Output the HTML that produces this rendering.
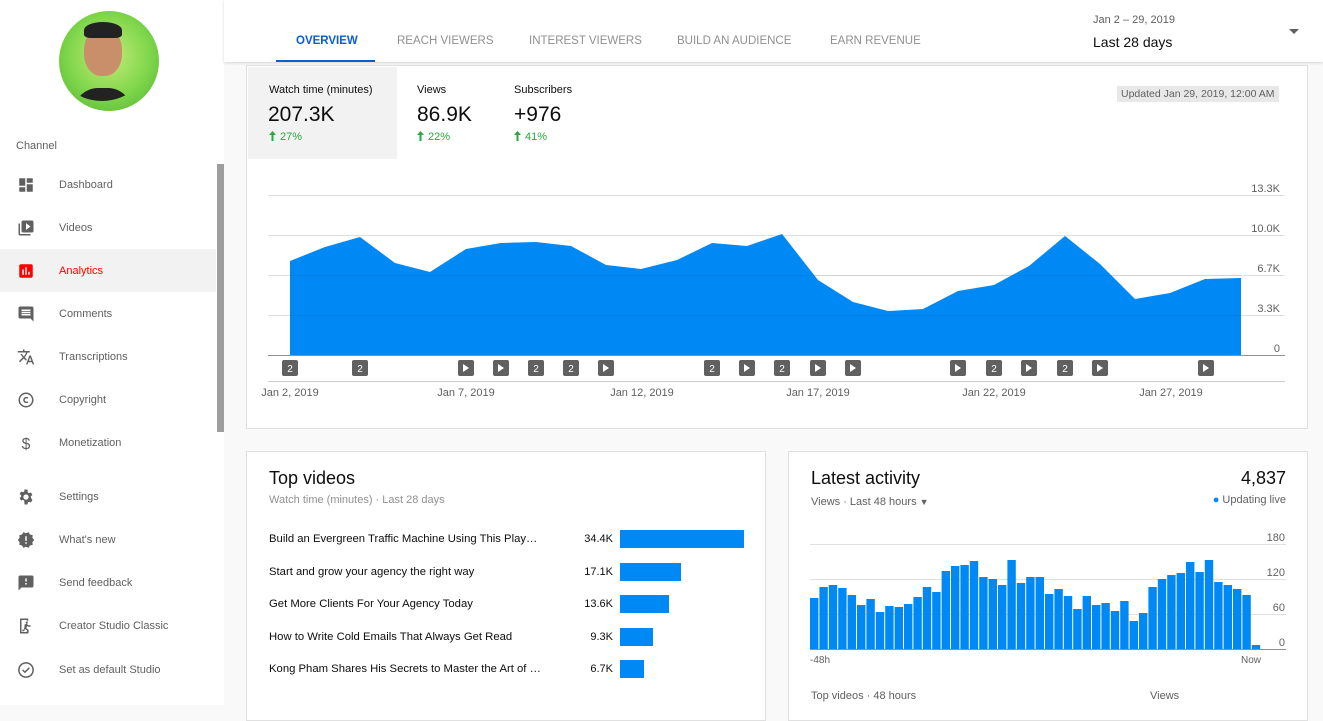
<!DOCTYPE html>
<html><head><meta charset="utf-8"><style>
*{margin:0;padding:0;box-sizing:border-box}
body{width:1323px;height:705px;overflow:hidden;background:#f9f9f9;font-family:"Liberation Sans",sans-serif;position:relative;color:#0d0d0d}
.a{position:absolute;white-space:nowrap}
.side{position:absolute;left:0;top:0;width:224px;height:705px;background:#fff}
.nav{position:absolute;left:0;width:216px;height:43px}
.nav .t{position:absolute;left:59px;top:16px;font-size:11px;color:#606060}
.nav svg{position:absolute;left:17px;top:13px}
.card{position:absolute;background:#fff;border:1px solid #e0e0e0}
.tab{position:absolute;top:34px;font-size:11.5px;color:#909090}
.g{color:#606060}
.up{display:inline-block;vertical-align:-1px;margin-right:4px}
.tv{position:absolute;left:269px;font-size:11.3px}
</style></head><body>
<div class="side">
<div class="a" style="left:59px;top:11px;width:100px;height:100px;border-radius:50%;background:radial-gradient(circle at 50% 45%,#c6ec7a 0,#7fd64b 55%,#4fb02e 100%)"></div>
<div class="a" style="left:84px;top:28px;width:38px;height:48px;border-radius:45%;background:#c98f6b"></div>
<div class="a" style="left:84px;top:22px;width:38px;height:16px;border-radius:50% 50% 20% 20%;background:#222"></div>
<div class="a" style="left:74px;top:88px;width:58px;height:24px;border-radius:30px 30px 0 0;background:#222;clip-path:circle(50px at 28px -37px)"></div>
<div class="a" style="left:16px;top:140px;font-size:11px;color:#606060">Channel</div>
<div class="a" style="left:217px;top:164px;width:7px;height:268px;background:#9e9e9e"></div>
<div class="nav" style="top:163px"><svg width="18" height="18" viewBox="0 0 24 24"><path fill="#606060" d="M3 13h8V3H3zm0 8h8v-6H3zm10 0h8V11h-8zm0-18v6h8V3z"/></svg><div class="t">Dashboard</div></div>
<div class="nav" style="top:206px"><svg width="18" height="18" viewBox="0 0 24 24"><path fill="#606060" d="M4 6H2v14c0 1.1.9 2 2 2h14v-2H4zm16-4H8c-1.1 0-2 .9-2 2v12c0 1.1.9 2 2 2h12c1.1 0 2-.9 2-2V4c0-1.1-.9-2-2-2zm-8 12.5v-9l6 4.5z"/></svg><div class="t">Videos</div></div>
<div class="nav" style="top:249px;background:#f2f2f2"><svg width="18" height="18" viewBox="0 0 24 24"><path fill="#f00" d="M19 3H5c-1.1 0-2 .9-2 2v14c0 1.1.9 2 2 2h14c1.1 0 2-.9 2-2V5c0-1.1-.9-2-2-2zM9 17H7v-7h2zm4 0h-2V7h2zm4 0h-2v-4h2z"/></svg><div class="t" style="color:#f00">Analytics</div></div>
<div class="nav" style="top:292px"><svg width="18" height="18" viewBox="0 0 24 24"><path fill="#606060" d="M21.99 4c0-1.1-.89-2-1.99-2H4c-1.1 0-2 .9-2 2v12c0 1.1.9 2 2 2h14l4 4zM18 14H6v-2h12zm0-3H6V9h12zm0-3H6V6h12z"/></svg><div class="t">Comments</div></div>
<div class="nav" style="top:335px"><svg width="18" height="18" viewBox="0 0 24 24"><path fill="#606060" d="M12.87 15.07l-2.54-2.51.03-.03A17.5 17.5 0 0014.07 6H17V4h-7V2H8v2H1v2h11.17C11.5 7.920 10.44 9.75 9 11.35 8.07 10.32 7.3 9.19 6.69 8h-2c.73 1.63 1.73 3.17 2.98 4.56l-5.09 5.02L4 19l5-5 3.110 3.11zM18.5 10h-2L12 22h2l1.12-3h4.75L21 22h2zm-2.62 7l1.62-4.33L19.12 17z"/></svg><div class="t">Transcriptions</div></div>
<div class="nav" style="top:378px"><svg width="18" height="18" viewBox="0 0 24 24"><circle cx="12" cy="12" r="9" fill="none" stroke="#606060" stroke-width="2"/><path d="M14.5 9.5a3.2 3.2 0 100 5" fill="none" stroke="#606060" stroke-width="2"/></svg><div class="t">Copyright</div></div>
<div class="nav" style="top:421px"><svg width="18" height="18" viewBox="0 0 24 24"><text x="12" y="20" font-size="21" text-anchor="middle" fill="#606060" font-family="Liberation Sans">$</text></svg><div class="t">Monetization</div></div>
<div class="nav" style="top:475px"><svg width="18" height="18" viewBox="0 0 24 24"><path fill="#606060" d="M19.43 12.98c.04-.32.07-.64.07-.98s-.03-.66-.07-.98l2.11-1.65-2-3.46-2.49 1a7.3 7.3 0 00-1.69-.98L15 2h-4l-.38 2.65c-.61.25-1.17.59-1.69.98l-2.49-1-2 3.46 2.11 1.65c-.04.32-.07.65-.07.98s.03.66.07.98l-2.11 1.65 2 3.46 2.49-1c.52.4 1.08.73 1.69.98L11 22h4l.38-2.65c.61-.25 1.17-.59 1.69-.98l2.49 1 2-3.46zM13 15.5a3.5 3.5 0 110-7 3.5 3.5 0 010 7z" transform="translate(-1 0)"/></svg><div class="t">Settings</div></div>
<div class="nav" style="top:518px"><svg width="18" height="18" viewBox="0 0 24 24"><path fill="#606060" d="M23 12l-2.44-2.78.34-3.68-3.61-.82-1.89-3.18L12 3 8.6 1.54 6.71 4.72l-3.61.81.34 3.68L1 12l2.44 2.78-.34 3.69 3.61.82 1.89 3.18L12 21l3.4 1.46 1.89-3.18 3.61-.82-.34-3.68zm-10 5h-2v-2h2zm0-4h-2V7h2z"/></svg><div class="t">What's new</div></div>
<div class="nav" style="top:561px"><svg width="18" height="18" viewBox="0 0 24 24"><path fill="#606060" d="M20 2H4c-1.1 0-2 .9-2 2v18l4-4h14c1.1 0 2-.9 2-2V4c0-1.1-.9-2-2-2zm-7 12h-2v-2h2zm0-4h-2V6h2z"/></svg><div class="t">Send feedback</div></div>
<div class="nav" style="top:604px"><svg width="18" height="18" viewBox="0 0 24 24"><path fill="#606060" d="M4 2h11v3h-2V4H6v16h7v-1h2v3H4zm9 4a1.5 1.5 0 110 3 1.5 1.5 0 010-3zm-3 4l3-1 2 2 3 0v2h-3l-1.5-1-1 3 3 2v4h-2v-3l-3-2-1 3H7v-2h2l1-4z"/></svg><div class="t">Creator Studio Classic</div></div>
<div class="nav" style="top:648px"><svg width="18" height="18" viewBox="0 0 24 24"><circle cx="12" cy="12" r="9.5" fill="none" stroke="#606060" stroke-width="2"/><path d="M7.5 12l3 3 6-6" fill="none" stroke="#606060" stroke-width="2"/></svg><div class="t">Set as default Studio</div></div>
</div>

<div class="a" style="left:224px;top:0;width:1099px;height:62px;background:#fff;box-shadow:0 1px 3px rgba(0,0,0,.15)"></div>
<div class="tab" style="left:296px;top:35px;color:#065fd4;font-weight:bold">OVERVIEW</div>
<div class="a" style="left:276px;top:60px;width:99px;height:2px;background:#065fd4"></div>
<div class="tab" style="left:397px;top:35px">REACH VIEWERS</div>
<div class="tab" style="left:529px;top:35px">INTEREST VIEWERS</div>
<div class="tab" style="left:677px;top:35px">BUILD AN AUDIENCE</div>
<div class="tab" style="left:830px;top:35px">EARN REVENUE</div>
<div class="a g" style="left:1093px;top:14px;font-size:11px">Jan 2 – 29, 2019</div>
<div class="a" style="left:1093px;top:34px;font-size:14px">Last 28 days</div>
<div class="a" style="left:1289px;top:29px;width:0;height:0;border-left:5px solid transparent;border-right:5px solid transparent;border-top:5px solid #606060"></div>

<div class="card" style="left:246px;top:65px;width:1062px;height:364px">
<div class="a" style="left:1px;top:1px;width:149px;height:92px;background:#f2f2f2"></div>
</div>
<div class="a" style="left:269px;top:84px;font-size:11px">Watch time (minutes)</div>
<div class="a" style="left:268px;top:103px;font-size:21px">207.3K</div>
<div class="a" style="left:269px;top:131px;font-size:11px;color:#2ba640"><svg class="up" width="7" height="10" viewBox="0 0 7 10"><path d="M3.5 0L0 4h2.5v6h2V4H7z" fill="#2ba640"/></svg>27%</div>
<div class="a" style="left:417px;top:84px;font-size:11px">Views</div>
<div class="a" style="left:417px;top:103px;font-size:21px">86.9K</div>
<div class="a" style="left:417px;top:131px;font-size:11px;color:#2ba640"><svg class="up" width="7" height="10" viewBox="0 0 7 10"><path d="M3.5 0L0 4h2.5v6h2V4H7z" fill="#2ba640"/></svg>22%</div>
<div class="a" style="left:514px;top:84px;font-size:11px">Subscribers</div>
<div class="a" style="left:514px;top:103px;font-size:21px">+976</div>
<div class="a" style="left:514px;top:131px;font-size:11px;color:#2ba640"><svg class="up" width="7" height="10" viewBox="0 0 7 10"><path d="M3.5 0L0 4h2.5v6h2V4H7z" fill="#2ba640"/></svg>41%</div>
<div class="a" style="left:1117px;top:86px;font-size:10.5px;background:#e8e8e8;color:#606060;padding:2px 4px">Updated Jan 29, 2019, 12:00 AM</div>

<svg class="a" style="left:0;top:0" width="1323" height="705" font-family="Liberation Sans">
<g stroke="#e0e0e0" stroke-width="1"><line x1="268" y1="195.5" x2="1285" y2="195.5"/><line x1="268" y1="235.5" x2="1285" y2="235.5"/><line x1="268" y1="275.5" x2="1285" y2="275.5"/><line x1="268" y1="315.5" x2="1285" y2="315.5"/></g>
<polygon fill="#0088f5" points="290,355 290,261 325,247 360,237 395,263 430,272 466,249 501,243 536,242 571,246 606,265 641,269 677,260 712,243 747,246 782,234 818,280 853,302 888,311 923,309 958,291 994,285 1029,266 1065,236 1100,264 1135,299 1170,293 1205,279 1241,278 1241,355"/>
<g stroke="rgba(0,0,0,.06)"><line x1="290" y1="275.5" x2="1241" y2="275.5"/><line x1="290" y1="315.5" x2="1241" y2="315.5"/></g>
<line x1="268" y1="355.5" x2="1285" y2="355.5" stroke="#909090"/>
<line x1="268" y1="381.5" x2="1285" y2="381.5" stroke="#ccc"/>
<g font-size="11" fill="#606060" text-anchor="end"><text x="1280" y="192">13.3K</text><text x="1280" y="232">10.0K</text><text x="1280" y="272">6.7K</text><text x="1280" y="312">3.3K</text><text x="1280" y="352">0</text></g>
<g font-size="11" fill="#606060" text-anchor="middle"><text x="290" y="396">Jan 2, 2019</text><text x="466" y="396">Jan 7, 2019</text><text x="642" y="396">Jan 12, 2019</text><text x="818" y="396">Jan 17, 2019</text><text x="994" y="396">Jan 22, 2019</text><text x="1171" y="396">Jan 27, 2019</text></g>
<g font-size="10" fill="#fff" text-anchor="middle">
<rect x="282" y="360" width="16" height="16" rx="2" fill="#606060"/><text x="290" y="372">2</text>
<rect x="352" y="360" width="16" height="16" rx="2" fill="#606060"/><text x="360" y="372">2</text>
<rect x="458" y="360" width="16" height="16" rx="2" fill="#606060"/><path d="M463 364l6 4-6 4z"/>
<rect x="493" y="360" width="16" height="16" rx="2" fill="#606060"/><path d="M498 364l6 4-6 4z"/>
<rect x="528" y="360" width="16" height="16" rx="2" fill="#606060"/><text x="536" y="372">2</text>
<rect x="563" y="360" width="16" height="16" rx="2" fill="#606060"/><text x="571" y="372">2</text>
<rect x="598" y="360" width="16" height="16" rx="2" fill="#606060"/><path d="M603 364l6 4-6 4z"/>
<rect x="704" y="360" width="16" height="16" rx="2" fill="#606060"/><text x="712" y="372">2</text>
<rect x="739" y="360" width="16" height="16" rx="2" fill="#606060"/><path d="M744 364l6 4-6 4z"/>
<rect x="774" y="360" width="16" height="16" rx="2" fill="#606060"/><text x="782" y="372">2</text>
<rect x="810" y="360" width="16" height="16" rx="2" fill="#606060"/><path d="M815 364l6 4-6 4z"/>
<rect x="845" y="360" width="16" height="16" rx="2" fill="#606060"/><path d="M850 364l6 4-6 4z"/>
<rect x="950" y="360" width="16" height="16" rx="2" fill="#606060"/><path d="M955 364l6 4-6 4z"/>
<rect x="986" y="360" width="16" height="16" rx="2" fill="#606060"/><text x="994" y="372">2</text>
<rect x="1021" y="360" width="16" height="16" rx="2" fill="#606060"/><path d="M1026 364l6 4-6 4z"/>
<rect x="1057" y="360" width="16" height="16" rx="2" fill="#606060"/><text x="1065" y="372">2</text>
<rect x="1092" y="360" width="16" height="16" rx="2" fill="#606060"/><path d="M1097 364l6 4-6 4z"/>
<rect x="1198" y="360" width="16" height="16" rx="2" fill="#606060"/><path d="M1203 364l6 4-6 4z"/>
</g>
</svg>

<div class="card" style="left:246px;top:451px;width:520px;height:270px"></div>
<div class="a" style="left:269px;top:468px;font-size:18px">Top videos</div>
<div class="a" style="left:269px;top:494px;font-size:11px;color:#909090">Watch time (minutes) · Last 28 days</div>
<div class="a tv" style="top:533px">Build an Evergreen Traffic Machine Using This Play…</div>
<div class="a tv" style="top:566px">Start and grow your agency the right way</div>
<div class="a tv" style="top:598px">Get More Clients For Your Agency Today</div>
<div class="a tv" style="top:631px">How to Write Cold Emails That Always Get Read</div>
<div class="a tv" style="top:663px">Kong Pham Shares His Secrets to Master the Art of …</div>
<div class="a" style="left:572px;top:533px;width:41px;text-align:right;font-size:11px">34.4K</div>
<div class="a" style="left:572px;top:566px;width:41px;text-align:right;font-size:11px">17.1K</div>
<div class="a" style="left:572px;top:598px;width:41px;text-align:right;font-size:11px">13.6K</div>
<div class="a" style="left:572px;top:631px;width:41px;text-align:right;font-size:11px">9.3K</div>
<div class="a" style="left:572px;top:663px;width:41px;text-align:right;font-size:11px">6.7K</div>
<div class="a" style="left:620px;top:530px;width:124px;height:18px;background:#0088f5"></div>
<div class="a" style="left:620px;top:563px;width:61px;height:18px;background:#0088f5"></div>
<div class="a" style="left:620px;top:595px;width:49px;height:18px;background:#0088f5"></div>
<div class="a" style="left:620px;top:628px;width:33px;height:18px;background:#0088f5"></div>
<div class="a" style="left:620px;top:660px;width:24px;height:18px;background:#0088f5"></div>

<div class="card" style="left:788px;top:451px;width:520px;height:270px"></div>
<div class="a" style="left:811px;top:468px;font-size:18px">Latest activity</div>
<div class="a" style="left:1200px;top:468px;width:86px;text-align:right;font-size:18px">4,837</div>
<div class="a" style="left:811px;top:496px;font-size:11px;color:#606060">Views · Last 48 hours <span style="font-size:9px">▼</span></div>
<div class="a" style="left:1180px;top:494px;width:106px;text-align:right;font-size:11px;color:#606060"><span style="color:#0088f5">●</span> Updating live</div>
<svg class="a" style="left:790px;top:520px" width="520" height="185" font-family="Liberation Sans">
<g stroke="#e0e0e0"><line x1="20" y1="24.5" x2="496" y2="24.5"/><line x1="20" y1="59.5" x2="496" y2="59.5"/><line x1="20" y1="94.5" x2="496" y2="94.5"/></g>
<g fill="#0088f5" id="bars"></g>
<line x1="20" y1="129.5" x2="496" y2="129.5" stroke="#909090"/>
<g font-size="11" fill="#606060" text-anchor="end"><text x="495" y="21">180</text><text x="495" y="56">120</text><text x="495" y="91">60</text><text x="495" y="126">0</text></g>
<text x="20" y="143" font-size="10" fill="#606060">-48h</text><text x="471" y="143" font-size="10" fill="#606060" text-anchor="end">Now</text>
<text x="21" y="179" font-size="11" fill="#606060">Top videos · 48 hours</text><text x="360" y="179" font-size="11" fill="#606060">Views</text>
</svg>
<script>
var h=[51,62,64,61,54,44,50,37,43,42,45,52,62,57,78,83,84,88,72,70,64,89,66,72,72,55,60,53,40,53,44,46,38,48,28,36,62,70,74,76,87,77,89,67,64,60,54,4];
var s='';for(var i=0;i<h.length;i++){s+='<rect x="'+(20+i*9.4).toFixed(1)+'" y="'+(129-h[i])+'" width="8.4" height="'+h[i]+'"/>';}
document.getElementById('bars').innerHTML=s;
</script>
</body></html>
